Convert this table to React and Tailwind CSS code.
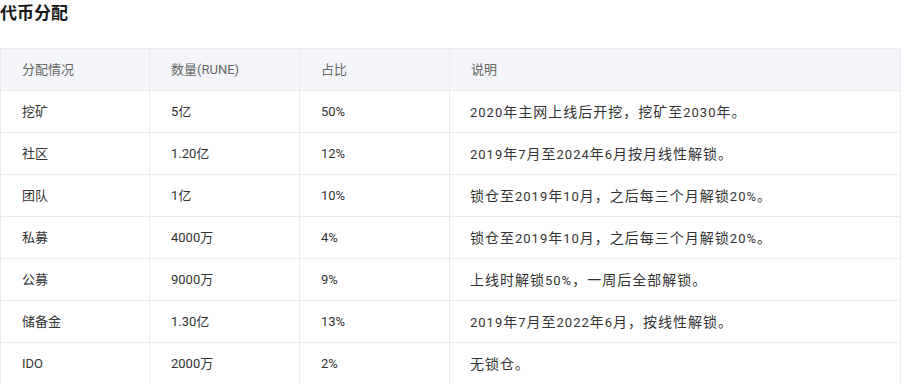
function Desc({ text }) {
  const parts = text.split(/([0-9%.]+)/);
  return (
    <>
      {parts.map((p, i) =>
        /^[0-9%.]+$/.test(p) ? (
          <span key={i} className="text-[13px] font-['Roboto']">
            {p}
          </span>
        ) : (
          <span key={i}>{p}</span>
        )
      )}
    </>
  );
}

export default function App() {
  const rows = [
    ["挖矿", "5亿", "50%", "2020年主网上线后开挖，挖矿至2030年。"],
    ["社区", "1.20亿", "12%", "2019年7月至2024年6月按月线性解锁。"],
    ["团队", "1亿", "10%", "锁仓至2019年10月，之后每三个月解锁20%。"],
    ["私募", "4000万", "4%", "锁仓至2019年10月，之后每三个月解锁20%。"],
    ["公募", "9000万", "9%", "上线时解锁50%，一周后全部解锁。"],
    ["储备金", "1.30亿", "13%", "2019年7月至2022年6月，按线性解锁。"],
    ["IDO", "2000万", "2%", "无锁仓。"],
  ];
  const font = { fontFamily: 'Roboto, "Noto Sans CJK SC", sans-serif' };
  return (
    <div className="w-[917px] h-[384px] overflow-hidden bg-white" style={font}>
      <div className="h-[26px] text-[17px] leading-[26px] font-bold text-[#1a1a1a]">代币分配</div>
      <div className="h-[22px]" />
      <table className="w-[900px] border-collapse table-fixed text-[13px] text-[#333]">
        <colgroup>
          <col className="w-[149px]" />
          <col className="w-[150px]" />
          <col className="w-[150px]" />
          <col className="w-[451px]" />
        </colgroup>
        <thead>
          <tr className="h-[42px] bg-[#f3f5f9] text-[#666]">
            {["分配情况", "数量(RUNE)", "占比", "说明"].map((h, i) => (
              <th key={i} className="border border-[#e8ebf0] px-[21px] text-left font-normal">
                {h}
              </th>
            ))}
          </tr>
        </thead>
        <tbody>
          {rows.map((r, i) => (
            <tr key={i} className="h-[42px]">
              {r.map((c, j) =>
                j === 3 ? (
                  <td
                    key={j}
                    className="border border-[#e8ebf0] px-[20px] text-[14px] tracking-[1px] font-['Noto_Sans_CJK_SC']"
                  >
                    <Desc text={c} />
                  </td>
                ) : (
                  <td key={j} className="border border-[#e8ebf0] px-[21px]">
                    {c}
                  </td>
                )
              )}
            </tr>
          ))}
        </tbody>
      </table>
    </div>
  );
}
